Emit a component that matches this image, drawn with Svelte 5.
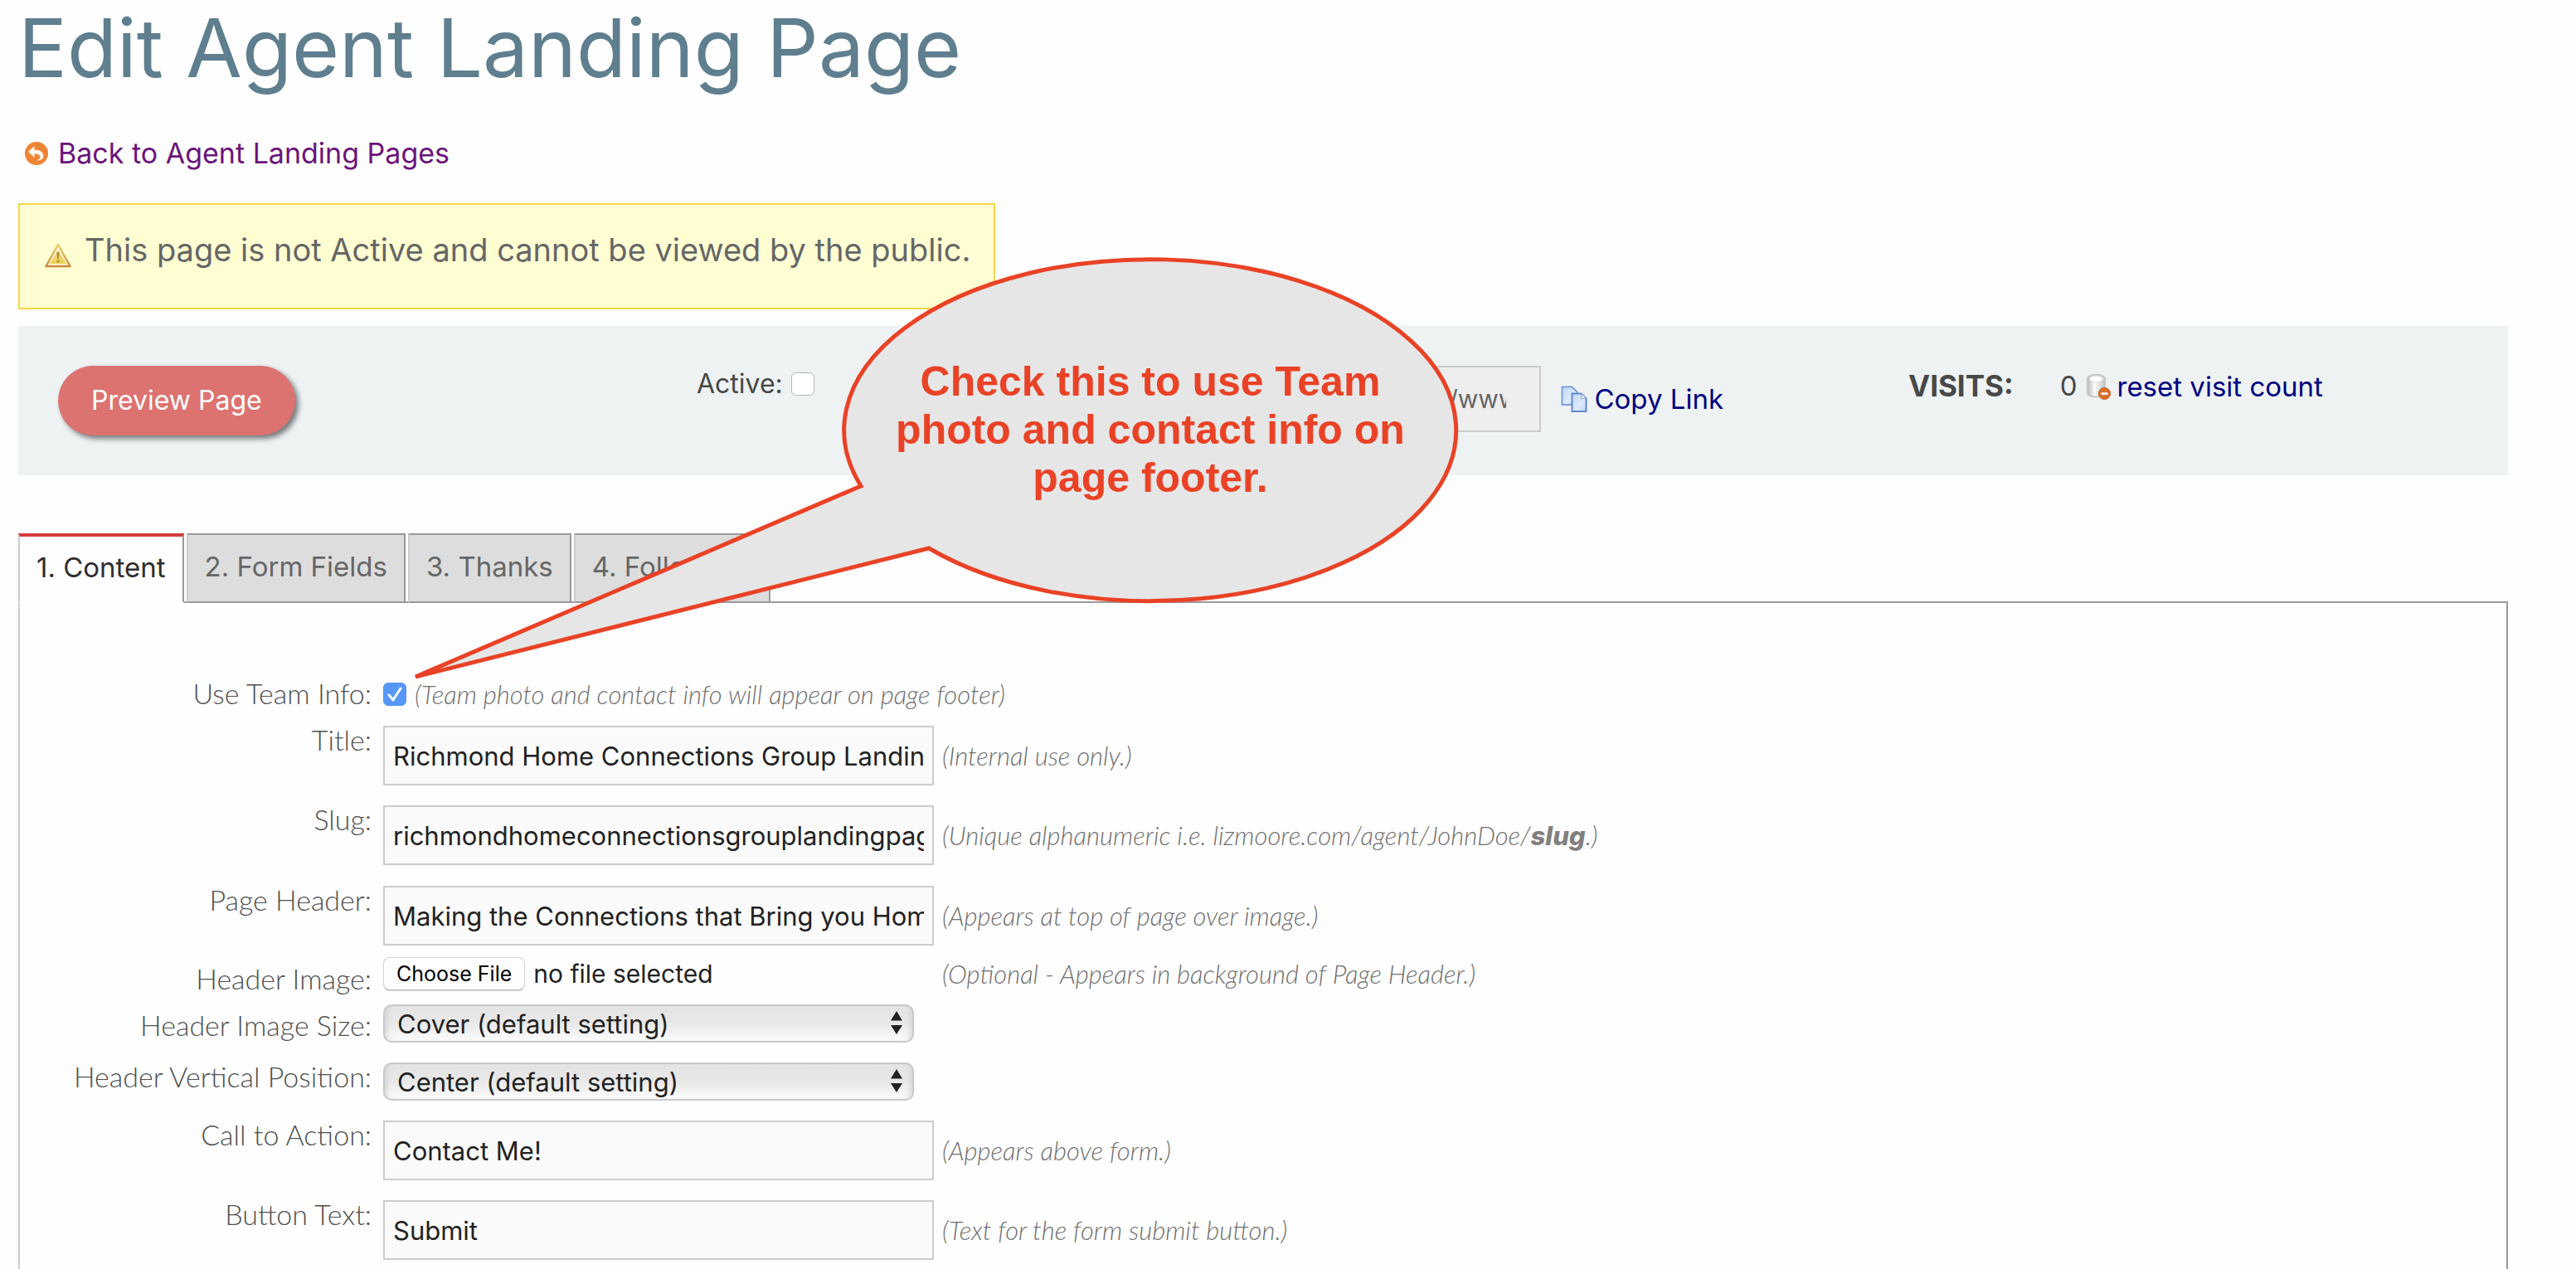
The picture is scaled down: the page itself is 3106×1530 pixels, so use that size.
<script>
  const tabs = ['1. Content', '2. Form Fields', '3. Thanks', '4. Follow Up'];
  let active = $state(0);
  let isActive = $state(false);
  let useTeam = $state(true);
  let url = $state('http://www.lizmoore.com/agent/richmondhomeconnections');
  let form = $state({
    title: 'Richmond Home Connections Group Landing Page',
    slug: 'richmondhomeconnectionsgrouplandingpage',
    header: 'Making the Connections that Bring you Home',
    cta: 'Contact Me!',
    button: 'Submit'
  });
</script>

{#snippet arrows()}
  <svg class="arrows" viewBox="0 0 14 28" aria-hidden="true">
    <path d="M7 0 14 11.500H0zM0 17h14L7 28z" fill="#222" />
  </svg>
{/snippet}

<main class="page">
  <h1>Edit Agent Landing Page</h1>

  <a class="back" href="#pages">
    <svg width="28" height="28" viewBox="0 0 28 28" aria-hidden="true">
      <circle cx="14" cy="14" r="14" fill="#ee8434" />
      <path d="M4 12 11.500 5v4.500c7 0 11 3.500 11 7.500 0 3.500-3 5.500-8.500 5.500 3.500-1.300 4.500-2.800 4.500-4.500 0-2.300-2.500-3.500-7-3.500V19z" fill="#fff6ec" />
    </svg>
    <span>Back to Agent Landing Pages</span>
  </a>

  <div class="warning" role="status">
    <svg width="32" height="30" viewBox="0 0 32 30" aria-hidden="true">
      <defs>
        <linearGradient id="warnEdge" x2="0" y2="1"><stop stop-color="#f0d36c" /><stop offset="1" stop-color="#c98a3c" /></linearGradient>
        <linearGradient id="warnFill" x2="0" y2="1"><stop stop-color="#ecd98f" /><stop offset="1" stop-color="#f0d24e" /></linearGradient>
      </defs>
      <path d="M16 2 30.500 28h-29z" fill="#fff9e6" stroke="url(#warnEdge)" stroke-width="2.500" stroke-linejoin="round" />
      <path d="M16 8 26 25H6z" fill="url(#warnFill)" />
      <path d="M14.300 11h3.400L17 19h-2z" fill="#b8913c" /><circle cx="16" cy="22" r="1.800" fill="#b8913c" />
    </svg>
    <span>This page is not Active and cannot be viewed by the public.</span>
  </div>

  <section class="bar">
    <div class="cell"><button class="preview" type="button">Preview Page</button></div>
    <div class="cell">
      <label class="line" for="active">Active:</label>
      <input id="active" class="check top" type="checkbox" bind:checked={isActive} />
      <input class="url" type="text" aria-label="Page URL" readonly value={url} />
      <a class="tool copy" href="#copy">
        <svg width="32" height="32" viewBox="0 0 32 32" aria-hidden="true">
          <defs><linearGradient id="sheet" x2="1" y2="1"><stop stop-color="#bcd6f8" /><stop offset=".6" stop-color="#dfeafc" /><stop offset="1" stop-color="#bcd4f6" /></linearGradient></defs>
          <path d="M1.500 1.500h12l6 6V23h-18z" fill="url(#sheet)" stroke="#7f9fd8" stroke-width="2" />
          <path d="M13.500 9.500h11l6 6V31h-17z" fill="url(#sheet)" stroke="#6288c8" stroke-width="2" />
          <path d="M24.500 9.500v6h6z" fill="#f4f8ff" stroke="#7f9fd8" />
        </svg>
        <span>Copy Link</span>
      </a>
    </div>
    <div class="cell">
      <strong class="line">VISITS:</strong>
      <span class="line count">0</span>
      <a class="tool reset" href="#reset">
        <svg width="30" height="32" viewBox="0 0 30 32" aria-hidden="true">
          <defs><linearGradient id="drum"><stop stop-color="#b8b8b8" /><stop offset=".4" stop-color="#fbfbfb" /><stop offset="1" stop-color="#c4c4c4" /></linearGradient></defs>
          <path d="M2 7c0-7 21-7 21 0v17c0 6-21 6-21 0z" fill="url(#drum)" stroke="#c6c6c6" stroke-width="2" />
          <ellipse cx="12.500" cy="7" rx="8" ry="3.500" fill="#fff" stroke="#ddd" />
          <circle cx="22.500" cy="24.500" r="7" fill="#d9702c" stroke="#bb5a1e" />
          <path d="M18.500 23.300h8v2.600h-8z" fill="#fff" />
        </svg>
        <span>reset visit count</span>
      </a>
    </div>
  </section>

  <div class="tabs" role="tablist">
    {#each tabs as tab, i}
      <button type="button" role="tab" class="tab" class:selected={active === i} aria-selected={active === i} onclick={() => (active = i)}>{tab}</button>
    {/each}
  </div>

  <form class="panel">
    <div class="row info">
      <label for="team">Use Team Info:</label>
      <div class="with-check">
        <input id="team" class="check" type="checkbox" bind:checked={useTeam} />
        <span class="hint">(Team photo and contact info will appear on page footer)</span>
      </div>
    </div>
    <div class="row">
      <label for="title">Title:</label>
      <input id="title" type="text" bind:value={form.title} />
      <span class="hint">(Internal use only.)</span>
    </div>
    <div class="row">
      <label for="slug">Slug:</label>
      <input id="slug" type="text" bind:value={form.slug} />
      <span class="hint">(Unique alphanumeric i.e. lizmoore.com/agent/JohnDoe/<b>slug</b>.)</span>
    </div>
    <div class="row tight">
      <label for="header">Page Header:</label>
      <input id="header" type="text" bind:value={form.header} />
      <span class="hint">(Appears at top of page over image.)</span>
    </div>
    <div class="row upload">
      <label for="image">Header Image:</label>
      <div class="file">
        <input id="image" type="file" />
        <span class="choose">Choose File</span>
        <span>no file selected</span>
      </div>
      <span class="hint">(Optional - Appears in background of Page Header.)</span>
    </div>
    <div class="row low">
      <label for="size">Header Image Size:</label>
      <div class="select">
        <select id="size"><option>Cover (default setting)</option><option>Contain</option></select>
        {@render arrows()}
      </div>
    </div>
    <div class="row">
      <label for="position">Header Vertical Position:</label>
      <div class="select">
        <select id="position"><option>Center (default setting)</option><option>Top</option><option>Bottom</option></select>
        {@render arrows()}
      </div>
    </div>
    <div class="row">
      <label for="cta">Call to Action:</label>
      <input id="cta" type="text" bind:value={form.cta} />
      <span class="hint">(Appears above form.)</span>
    </div>
    <div class="row last">
      <label for="button">Button Text:</label>
      <input id="button" type="text" bind:value={form.button} />
      <span class="hint">(Text for the form submit button.)</span>
    </div>
  </form>

  <aside class="callout">
    <svg width="1266" height="520" viewBox="496 306 1266 520" aria-hidden="true">
      <path d="M1038 586 501 816 1120 661A369 206 0 1 0 1038 586z" fill="#e6e6e6" stroke="#e94226" stroke-width="5" />
    </svg>
    <p>Check this to use Team photo and contact info on page footer.</p>
  </aside>
</main>

<style>
  :global(body) { margin: 0; background: #fefefe; }
  .page {
    position: relative;
    box-sizing: border-box;
    display: flex;
    flex-direction: column;
    min-height: 100vh;
    padding: 0 82px 0 22px;
    font-family: Inter, "Liberation Sans", sans-serif;
    font-size: 33px;
    color: #484848;
  }
  h1 { margin: 0; font-size: 98px; line-height: 116px; font-weight: 400; color: #5f7f8f; }
  a { color: #000080; text-decoration: none; }
  .back {
    display: flex;
    align-items: center;
    gap: 12px;
    margin-top: 49px;
    padding-left: 8px;
    font-size: 34px;
    line-height: 40px;
    color: #6b147b;
  }
  .warning {
    display: flex;
    align-items: flex-end;
    align-self: flex-start;
    gap: 16px;
    margin-top: 40px;
    padding: 32px 28px 48px 30px;
    border: 2px solid #f8d648;
    background: #fffed2;
    font-size: 38px;
    line-height: 44px;
    color: #666;
  }
  .bar {
    display: grid;
    grid-template-columns: 770fr 1461fr 699fr;
    margin-top: 20px;
    padding: 48px 24px 48px 48px;
    background: #eef2f3;
  }
  .cell { display: flex; align-items: flex-start; min-width: 0; }
  .line { line-height: 48px; }
  label.line { font-size: 32px; line-height: 44px; }
  strong.line { font-size: 35px; }
  .preview {
    padding: 0 40px;
    border: 0;
    border-radius: 42px;
    background: #dc7371;
    box-shadow: 4px 4px 6px rgba(0, 0, 0, 0.5);
    font: 32px/84px Inter, "Liberation Sans", sans-serif;
    color: #fff;
  }
  .check {
    appearance: none;
    flex: none;
    width: 28px;
    height: 28px;
    margin: 0;
    border: 1px solid #b5b5b5;
    border-radius: 6px;
    background: #fff;
  }
  .check.top { margin: 8px 0 0 10px; }
  .check:checked {
    border-color: #5494f2;
    background: #5698f7 url("data:image/svg+xml,%3Csvg xmlns='http://www.w3.org/2000/svg' viewBox='0 0 28 28'%3E%3Cpath d='M7 15l5 6 9-14' fill='none' stroke='white' stroke-width='3' stroke-linecap='round' stroke-linejoin='round'/%3E%3C/svg%3E") center / 28px;
  }
  .url {
    box-sizing: border-box;
    width: 228px;
    height: 80px;
    margin-left: auto;
    padding: 0 40px;
    border: 2px solid #ccc;
    border-radius: 0;
    background: #eee;
    font: 30px Inter, "Liberation Sans", sans-serif;
    color: #666;
  }
  .tool { display: flex; align-items: center; gap: 8px; }
  .copy { margin-left: 24px; margin-right: 223px; line-height: 80px; }
  .count { margin-left: 56px; }
  .reset { margin-left: 10px; line-height: 50px; }

  .tabs { position: relative; display: flex; gap: 3px; margin: 70px 0 -2px; }
  .tab {
    height: 84px;
    padding: 0 20px 4px;
    border: 2px solid #999;
    border-left-color: #ccc;
    background: #ddd;
    font: 33px Inter, "Liberation Sans", sans-serif;
    color: #666;
  }
  .tab.selected {
    border-top: 4px solid #d63b3b;
    border-bottom-color: #fefefe;
    background: #fefefe;
    color: #2e2e2e;
  }
  .panel {
    flex: 1;
    padding-top: 92px;
    border: 2px solid #999;
    border-left-color: #ccc;
    border-bottom: 0;
  }
  .row {
    display: grid;
    grid-template-columns: 424px 664px 1fr;
    column-gap: 14px;
    align-items: start;
    padding-bottom: 24px;
  }
  .row > label {
    font: 300 34px/34px Lato, "Liberation Sans", sans-serif;
    text-align: right;
    white-space: nowrap;
    color: #505050;
  }
  .row.tight { padding-bottom: 12px; }
  .row.last { padding-bottom: 0; }
  .row.info { grid-template-columns: 424px 1fr; padding-bottom: 20px; }
  .row.upload { padding: 2px 0 14px; }
  .upload > label { padding-top: 9px; }
  .row.low > label { padding-top: 8px; }
  .hint {
    margin-left: -4px;
    font: italic 300 31px/72px Lato, "Liberation Sans", sans-serif;
    color: #707070;
  }
  .hint b { font-family: Inter, "Liberation Sans", sans-serif; font-weight: 800; color: #808080; }
  .with-check { display: flex; align-items: center; gap: 14px; height: 36px; }
  .with-check .hint { line-height: 36px; }
  .upload .hint { line-height: 40px; }
  .row > input {
    box-sizing: border-box;
    width: 100%;
    height: 72px;
    padding: 0 10px;
    border: 2px solid #ccc;
    border-radius: 0;
    background: #fafafa;
    font: 31px Inter, "Liberation Sans", sans-serif;
    color: #222;
  }
  .file {
    position: relative;
    display: flex;
    align-items: center;
    gap: 10px;
    height: 40px;
    font-size: 30px;
    color: #222;
  }
  .file input { position: absolute; inset: 0; width: 100%; opacity: 0; }
  .choose {
    padding: 0 15px;
    border: 1px solid #d4d4d4;
    border-bottom-color: #b4b4b4;
    border-radius: 8px;
    background: #fff;
    box-shadow: 0 1px 1px rgba(0, 0, 0, 0.15);
    font-size: 25px;
    line-height: 38px;
    color: #000;
  }
  .select { position: relative; width: 640px; }
  select {
    display: block;
    appearance: none;
    box-sizing: border-box;
    width: 100%;
    height: 46px;
    padding: 0 48px 0 15px;
    border: 2px solid #c9c9c9;
    border-radius: 10px;
    background: linear-gradient(#e4e4e4, #e8e8e8 50%, #fcfcfc);
    box-shadow: inset 6px 0 6px -4px #d2d2d2, inset -6px 0 6px -4px #d2d2d2;
    font: 31px Inter, "Liberation Sans", sans-serif;
    color: #222;
  }
  .arrows { position: absolute; top: 8px; right: 14px; width: 14px; height: 28px; pointer-events: none; }

  .callout { position: absolute; top: 306px; left: 496px; width: 1266px; height: 520px; pointer-events: none; }
  .callout svg { display: block; }
  .callout p {
    position: absolute;
    top: 125px;
    left: 561px;
    width: 660px;
    margin: 0;
    font: bold 50px/58px "Liberation Sans", Arial, sans-serif;
    text-align: center;
    color: #e94226;
  }
</style>
